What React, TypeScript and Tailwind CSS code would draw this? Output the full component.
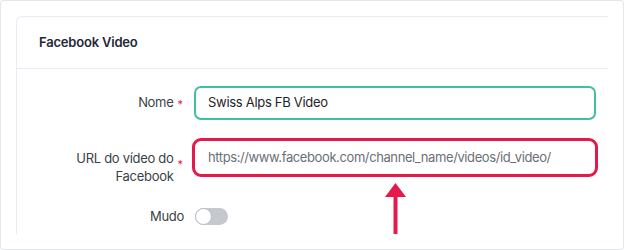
export default function App() {
  return (
    <div
      className="relative w-[624px] h-[250px] bg-white p-[15px] border border-[#e2e7ee] rounded-[3px] overflow-hidden"
      style={{ fontFamily: "Inter, 'Noto Sans', sans-serif" }}
    >
      <div className="h-[218px] bg-white border-t border-l border-[#e8edf3] rounded-tl-[6px]">
        {/* header */}
        <div className="h-[52px] flex items-center pl-[22px] border-b border-[#e8edf3]">
          <span className="text-[13px] font-semibold tracking-[-0.2px] text-[#1f2937]">Facebook Video</span>
        </div>

        {/* body */}
        <div className="flex flex-col">
          <div className="flex items-center mt-[17px]">
            <div className="w-[168px] pr-[2px] flex justify-end items-center gap-[4px]">
              <span className="text-[13px] tracking-[-0.3px] text-[#3b3f46]">Nome</span>
              <span className="text-[11px] text-[#e5194b] mt-[3px]">*</span>
            </div>
            <div className="ml-[9px] mr-[12px] flex-1 h-[34px] flex items-center px-[12px] border-2 border-[#40c09e] rounded-[7px]">
              <span className="text-[13px] tracking-[-0.3px] text-[#1f2328]">Swiss Alps FB Video</span>
            </div>
          </div>

          <div className="flex items-start mt-[18px]">
            <div className="w-[168px] pr-[2px] pt-[11px] flex justify-end items-center gap-[4px]">
              <span className="text-[13px] leading-[18px] tracking-[-0.3px] text-[#3b3f46] text-right">
                URL do vídeo do
                <br />
                Facebook
              </span>
              <span className="text-[11px] text-[#e5194b] -mt-[6px]">*</span>
            </div>
            <div className="ml-[7px] mr-[10px] flex-1 h-[39px] flex items-center px-[13px] border-[3px] border-[#e5194b] rounded-[9px]">
              <span className="text-[13px] tracking-[-0.4px] text-[#6b6f76] whitespace-nowrap">
                https://www.facebook.com/channel_name/videos/id_video/
              </span>
            </div>
          </div>

          <div className="flex items-center mt-[22px]">
            <div className="w-[168px] pr-[1px] flex justify-end">
              <span className="text-[13px] tracking-[-0.3px] text-[#3b3f46]">Mudo</span>
            </div>
            <div className="ml-[10px] w-[33px] h-[17px] rounded-full bg-[#c5c8cd] relative">
              <div className="absolute left-0 top-0 w-[17px] h-[17px] rounded-full bg-white border border-[#b9bcc2]" />
            </div>
          </div>
        </div>
      </div>

      <svg className="absolute left-[383px] top-[181px]" width="24" height="54" viewBox="0 0 24 54">
        <polygon points="11.5,1 22,15 1,15" fill="#e5194b" />
        <rect x="9.5" y="14" width="4" height="38" fill="#e5194b" />
      </svg>
    </div>
  );
}
